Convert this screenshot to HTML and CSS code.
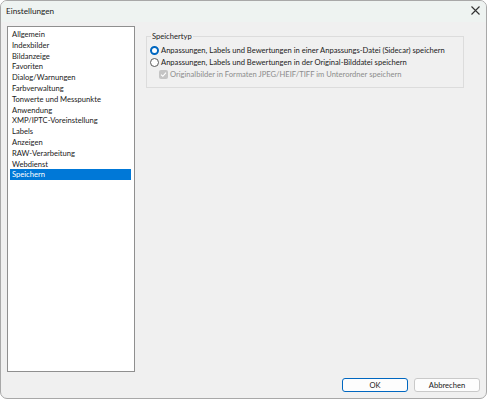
FILE: index.html
```html
<!DOCTYPE html>
<html lang="de">
<head>
<meta charset="utf-8">
<title>Einstellungen</title>
<link rel="stylesheet" href="styles.css">
</head>
<body>
<div class="window">
  <div class="titlebar">
    <span class="title">Einstellungen</span>
    <span class="close">
      <svg width="9" height="9" viewBox="0 0 9 9"><path d="M0.5 0.5 L8.5 8.5 M8.5 0.5 L0.5 8.5" stroke="#333" stroke-width="1.1" fill="none"/></svg>
    </span>
  </div>
  <div class="main">
    <ul class="list">
      <li>Allgemein</li>
      <li>Indexbilder</li>
      <li>Bildanzeige</li>
      <li>Favoriten</li>
      <li>Dialog/Warnungen</li>
      <li>Farbverwaltung</li>
      <li>Tonwerte und Messpunkte</li>
      <li>Anwendung</li>
      <li>XMP/IPTC-Voreinstellung</li>
      <li>Labels</li>
      <li>Anzeigen</li>
      <li>RAW-Verarbeitung</li>
      <li>Webdienst</li>
      <li class="selected">Speichern</li>
    </ul>
    <fieldset class="group">
      <legend>Speichertyp</legend>
      <div class="option"><span class="radio checked"></span><span>Anpassungen, Labels und Bewertungen in einer Anpassungs-Datei (Sidecar) speichern</span></div>
      <div class="option"><span class="radio"></span><span>Anpassungen, Labels und Bewertungen in der Original-Bilddatei speichern</span></div>
      <div class="option sub disabled"><span class="check"><svg width="7" height="7" viewBox="0 0 7 7"><path d="M1 3.6 L2.8 5.3 L6 1.6" stroke="#fff" stroke-width="1.1" fill="none"/></svg></span><span>Originalbilder in Formaten JPEG/HEIF/TIFF im Unterordner speichern</span></div>
    </fieldset>
  </div>
  <div class="footer">
    <button class="btn default">OK</button>
    <button class="btn">Abbrechen</button>
  </div>
</div>
</body>
</html>
```
FILE: styles.css
```css
html, body {
  margin: 0;
  padding: 0;
  background: #ffffff;
}
body {
  width: 487px;
  height: 399px;
  font-family: "Lato", "Noto Sans", sans-serif;
  font-size: 7.6px;
  color: #1b1b1b;
}
.window {
  box-sizing: border-box;
  width: 487px;
  height: 399px;
  border: 1px solid #a8a8a8;
  border-radius: 7px;
  overflow: hidden;
  background: #f0f0f0;
  display: flex;
  flex-direction: column;
}
.titlebar {
  height: 21px;
  flex: none;
  background: #eef3f1;
  display: flex;
  align-items: center;
  justify-content: space-between;
  padding: 0 6px 0 5px;
}
.title {
  font-size: 8.2px;
  color: #1a1a1a;
  margin-top: -2px;
}
.close {
  display: flex;
  width: 9px;
  height: 9px;
  margin-top: -2px;
}
.main {
  display: flex;
  align-items: flex-start;
  padding: 4px 0 0 6px;
  height: 346px;
  flex: none;
}
.list {
  list-style: none;
  margin: 0;
  padding: 2px 0 0 0;
  width: 128px;
  height: 346px;
  box-sizing: border-box;
  border: 1px solid #8f8f8f;
  background: #ffffff;
  flex: none;
}
.list li {
  height: 10.8px;
  line-height: 10.8px;
  padding-left: 2px;
  margin: 0 3px 0 2px;
  white-space: nowrap;
}
.list li.selected {
  background: #0078d7;
  color: #ffffff;
}
.group {
  margin: 5px 0 0 11px;
  width: 318px;
  height: 57px;
  box-sizing: border-box;
  border: 1px solid #dcdcdc;
  padding: 3px 0 0 3px;
  min-width: 0;
}
.group legend {
  padding: 0 1px;
  margin-left: 1px;
}
.option {
  display: flex;
  align-items: center;
  height: 12px;
  white-space: nowrap;
  gap: 2px;
}
.option.sub {
  padding-left: 9px;
}
.option.disabled {
  color: #8c8c8c;
}
.radio {
  width: 9px;
  height: 9px;
  box-sizing: border-box;
  border-radius: 50%;
  border: 1px solid #5a5a5a;
  background: #ffffff;
  flex: none;
}
.radio.checked {
  border: 2.5px solid #0067c0;
  background: #ffffff;
}
.check {
  width: 9px;
  height: 9px;
  box-sizing: border-box;
  border-radius: 2px;
  background: #c4c4c4;
  display: flex;
  align-items: center;
  justify-content: center;
  flex: none;
}
.footer {
  display: flex;
  justify-content: flex-end;
  gap: 6px;
  padding: 6px 6px 0 0;
}
.btn {
  width: 66px;
  height: 14px;
  box-sizing: border-box;
  border: 1px solid #c9c9c9;
  border-radius: 3px;
  background: #fdfdfd;
  font-family: "Lato", "Noto Sans", sans-serif;
  font-size: 7.6px;
  color: #1b1b1b;
  padding: 0;
  line-height: 12px;
}
.btn.default {
  border-color: #0067c0;
}
```
